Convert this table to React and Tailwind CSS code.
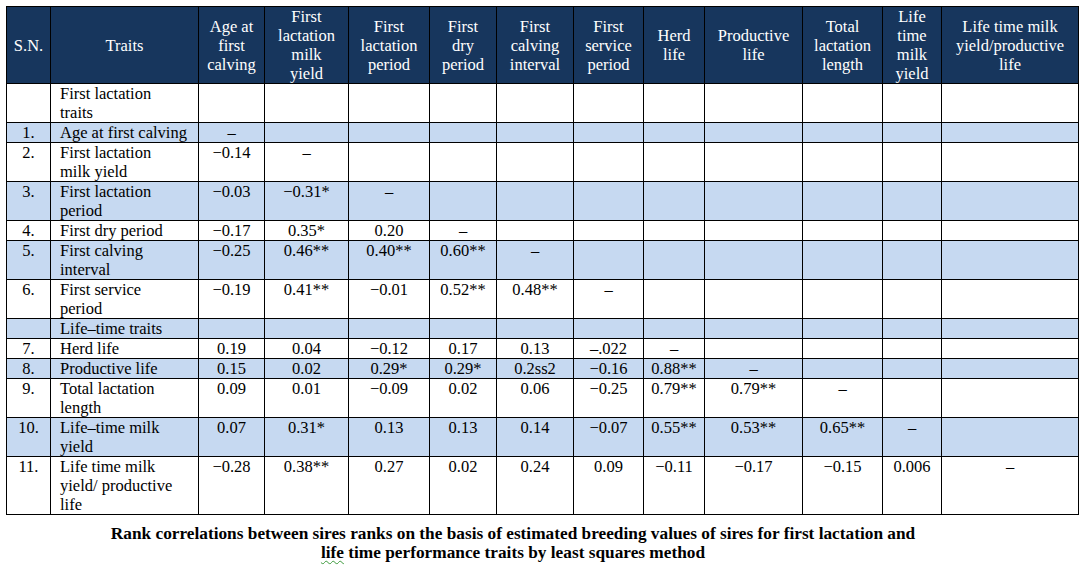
import React from "react";

const cols = [44, 148, 66, 84, 81, 67, 77, 70, 61, 98, 80, 59, 137];

const heads = [
    ["S.N."],
    ["Traits"],
    ["Age at", "first", "calving"],
    ["First", "lactation", "milk", "yield"],
    ["First", "lactation", "period"],
    ["First", "dry", "period"],
    ["First", "calving", "interval"],
    ["First", "service", "period"],
    ["Herd", "life"],
    ["Productive", "life"],
    ["Total", "lactation", "length"],
    ["Life", "time", "milk", "yield"],
    ["Life time milk", "yield/productive", "life"],
];

// sn, trait lines, values, blue row
const rows = [
    ["", ["First lactation", "traits"], [], false],
    ["1.", ["Age at first calving"], ["–"], true],
    ["2.", ["First lactation", "milk yield"], ["−0.14", "–"], false],
    ["3.", ["First lactation", "period"], ["−0.03", "−0.31*", "–"], true],
    ["4.", ["First dry period"], ["−0.17", "0.35*", "0.20", "–"], false],
    ["5.", ["First calving", "interval"], ["−0.25", "0.46**", "0.40**", "0.60**", "–"], true],
    ["6.", ["First service", "period"], ["−0.19", "0.41**", "−0.01", "0.52**", "0.48**", "–"], false],
    ["", ["Life–time traits"], [], true],
    ["7.", ["Herd life"], ["0.19", "0.04", "−0.12", "0.17", "0.13", "–.022", "–"], false],
    ["8.", ["Productive life"], ["0.15", "0.02", "0.29*", "0.29*", "0.2ss2", "−0.16", "0.88**", "–"], true],
    ["9.", ["Total lactation", "length"], ["0.09", "0.01", "−0.09", "0.02", "0.06", "−0.25", "0.79**", "0.79**", "–"], false],
    ["10.", ["Life–time milk", "yield"], ["0.07", "0.31*", "0.13", "0.13", "0.14", "−0.07", "0.55**", "0.53**", "0.65**", "–"], true],
    ["11.", ["Life time milk", "yield/ productive", "life"], ["−0.28", "0.38**", "0.27", "0.02", "0.24", "0.09", "−0.11", "−0.17", "−0.15", "0.006", "–"], false],
];

const Lines = ({ lines }) =>
    lines.map((l, i) => (
        <React.Fragment key={i}>
            {i > 0 && <br />}
            {l}
        </React.Fragment>
    ));

export default function App() {
    return (
        <div className="min-h-screen bg-white pt-[6px] pl-[6px] font-['Liberation_Serif',serif] text-black">
            <table className="table-fixed border-collapse w-[1072px] text-[16.5px] leading-[19px]">
                <colgroup>
                    {cols.map((w, i) => (
                        <col key={i} style={{ width: w }} />
                    ))}
                </colgroup>
                <thead>
                    <tr className="bg-[#17365d] text-white">
                        {heads.map((h, i) => (
                            <th key={i} className="border border-black font-normal text-center align-middle px-0 py-0 h-[77px]">
                                <Lines lines={h} />
                            </th>
                        ))}
                    </tr>
                </thead>
                <tbody>
                    {rows.map(([sn, trait, vals, blue], r) => (
                        <tr key={r} className={blue ? "bg-[#c6d9f1]" : "bg-white"}>
                            <td className="border border-black text-center align-top p-0">{sn}</td>
                            <td className="border border-black text-left align-top pl-[9px] pr-0 py-0 whitespace-nowrap">
                                <Lines lines={trait} />
                            </td>
                            {cols.slice(2).map((_, c) => (
                                <td key={c} className="border border-black text-center align-top p-0">
                                    {vals[c] || ""}
                                </td>
                            ))}
                        </tr>
                    ))}
                </tbody>
            </table>
            <div className="w-[1014px] mt-[10px] text-center font-bold text-[17.3px] leading-[18.5px]">
                Rank correlations between sires ranks on the basis of estimated breeding values of sires for first lactation and
                <br />
                <span className="underline decoration-wavy decoration-[#3c9a3c] decoration-1 underline-offset-2">life</span> time performance traits by least squares method
            </div>
        </div>
    );
}
